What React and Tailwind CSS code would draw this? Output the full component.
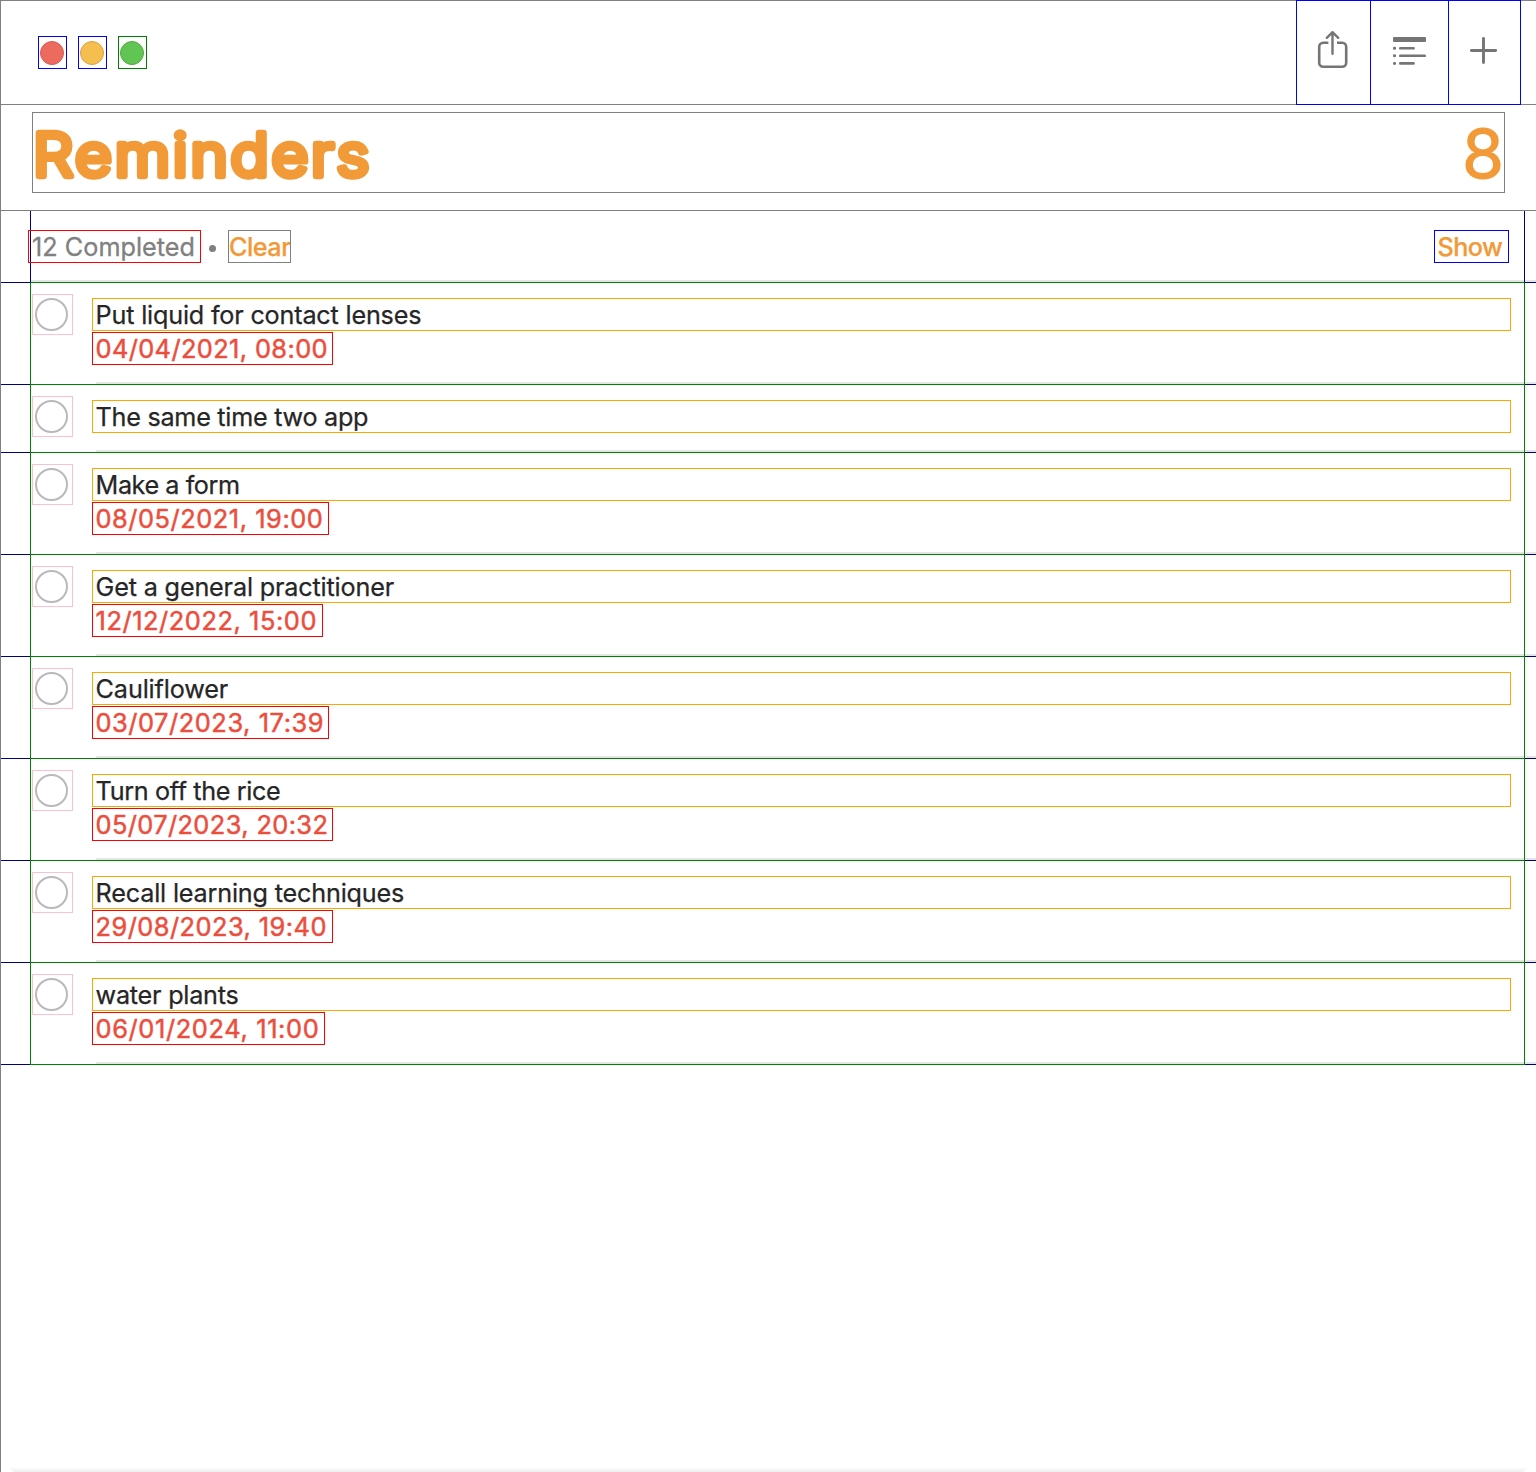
import React from "react";

const reminders = [
  { title: "Put liquid for contact lenses", track: "tracking-[-0.19px]", due: "04/04/2021, 08:00", dueBox: "w-[241px] tracking-[0.38px]" },
  { title: "The same time two app", track: "tracking-[-0.27px]" },
  { title: "Make a form", track: "tracking-[-0.44px]", due: "08/05/2021, 19:00", dueBox: "w-[237px] tracking-[0.54px]" },
  { title: "Get a general practitioner", track: "tracking-[-0.17px]", due: "12/12/2022, 15:00", dueBox: "w-[231px] tracking-[0.56px]" },
  { title: "Cauliflower", track: "tracking-[-0.13px]", due: "03/07/2023, 17:39", dueBox: "w-[237px] tracking-[0.56px]" },
  { title: "Turn off the rice", track: "tracking-[-0.36px]", due: "05/07/2023, 20:32", dueBox: "w-[241px] tracking-[0.39px]" },
  { title: "Recall learning techniques", track: "tracking-[-0.18px]", due: "29/08/2023, 19:40", dueBox: "w-[241px] tracking-[0.46px]" },
  { title: "water plants", track: "tracking-[-0.24px]", due: "06/01/2024, 11:00", dueBox: "w-[233px] tracking-[0.64px]" },
];

function TrafficLight({ box, dot }) {
  return (
    <div className={`h-[33px] w-[29px] border pl-px pt-1 ${box}`}>
      <div className={`size-6 rounded-full border ${dot}`} />
    </div>
  );
}

function ToolButton({ width, label, children }) {
  return (
    <button aria-label={label} className={`-mt-px -ml-px h-[105px] shrink-0 border border-[#0000ff] text-[#757575] ${width}`}>
      {children}
    </button>
  );
}

function Header() {
  return (
    <header className="flex h-[105px] shrink-0 justify-between border-y border-[#808080]">
      <div className="flex gap-[11px] pl-[37px] pt-[35px]">
        <TrafficLight box="border-[#0000ff]" dot="border-[#d65a50] bg-[#ec6a5e]" />
        <TrafficLight box="border-[#0000ff]" dot="border-[#d8a243] bg-[#f4bf4f]" />
        <TrafficLight box="border-[#008000]" dot="border-[#52a842] bg-[#61c554]" />
      </div>
      <div className="flex pr-[15px]">
        <ToolButton width="w-[75px]" label="Share">
          <svg width="73" height="103" viewBox="1297 1 73 103" fill="none" stroke="currentColor" strokeWidth="2.6" strokeLinejoin="round">
            <path d="M1328.4 42.8h-5.2a4 4 0 0 0-4 4v16a4 4 0 0 0 4 4h19a4 4 0 0 0 4-4v-16a4 4 0 0 0-4-4h-5.2" />
            <path d="M1332.5 32.4v21.4M1326.8 37.8l5.7-5.6 5.7 5.6" strokeLinecap="round" strokeWidth="2.4" />
          </svg>
        </ToolButton>
        <ToolButton width="w-[79px]" label="View options">
          <svg width="77" height="103" viewBox="1371 1 77 103" fill="currentColor">
            <rect x="1393" y="37" width="33" height="5" rx="1" />
            <rect x="1393" y="46.8" width="3" height="3" rx="1.3" />
            <rect x="1399" y="47" width="15.8" height="2.6" rx="1.2" />
            <rect x="1393" y="54.3" width="3" height="3" rx="1.3" />
            <rect x="1399" y="54.5" width="27" height="2.6" rx="1.2" />
            <rect x="1393" y="61.9" width="3" height="3" rx="1.3" />
            <rect x="1399" y="62.1" width="15.8" height="2.6" rx="1.2" />
          </svg>
        </ToolButton>
        <ToolButton width="w-[73px]" label="Add">
          <svg width="71" height="103" viewBox="1449 1 71 103" fill="none" stroke="currentColor" strokeWidth="2.9" strokeLinecap="round">
            <path d="M1471.4 50.5h24.3M1483.5 38.4v24.2" />
          </svg>
        </ToolButton>
      </div>
    </header>
  );
}

function Title() {
  return (
    <section className="h-[106px] shrink-0 border-b border-[#808080] pl-[31px] pt-[7px]">
      <div className="flex h-[81px] w-[1473px] items-start justify-between border border-[#808080]">
        <h1>
          <svg width="345" height="79" className="block">
            <text transform="translate(-0.1 62.7) scale(1.07 1)" fontFamily="Inter, sans-serif" fontWeight="300" fontSize="59.3" letterSpacing="2.6" fill="#f19a37" stroke="#f19a37" strokeWidth="6.4" strokeLinejoin="round">
              Reminders
            </text>
          </svg>
        </h1>
        <span className="text-[68px] leading-[81px] text-[#f19a37] [-webkit-text-stroke:1.1px_#f19a37]">8</span>
      </div>
    </section>
  );
}

function Summary() {
  return (
    <div className="flex h-[72px] shrink-0">
      <div className="w-[29px] border-b border-[#000080]" />
      <div className="flex w-[1495px] flex-col border-x border-b border-x-[#000080] border-b-[#008000]">
        <div className="flex h-[69px] items-start pt-[19px] text-[25.2px] leading-[33px]">
          <div className="relative -ml-[3px] h-[33px] w-[173px] whitespace-nowrap border border-[#ff0000] pl-[3px] tracking-[0.04px] text-[#808080] [-webkit-text-stroke:0.3px_#808080]">12 Completed</div>
          <div className="ml-2 mt-[15px] size-[7px] rounded-full bg-[#808080]" />
          <div className="ml-3 h-[33px] w-[63px] overflow-hidden whitespace-nowrap border border-[#808080] font-medium tracking-[-0.5px] text-[#f19a37] [-webkit-text-stroke:0.25px_#f19a37]">Clear</div>
          <div className="ml-auto mr-[15px] h-[33px] w-[75px] whitespace-nowrap border border-[#0000ff] pl-[2.6px] font-medium tracking-[-0.6px] text-[#f19a37] [-webkit-text-stroke:0.25px_#f19a37]">Show</div>
        </div>
        <div className="h-0.5 bg-[#e5e5e5]" />
      </div>
      <div className="flex grow flex-col justify-end border-b border-[#000080]">
        <div className="h-0.5 bg-[#e5e5e5]" />
      </div>
    </div>
  );
}

function Row({ item }) {
  return (
    <li className={`flex shrink-0 ${item.due ? "h-[102px]" : "h-[68px]"}`}>
      <div className="w-[29px] border-b border-[#000080]" />
      <div className="flex w-[1495px] border-x border-b border-[#008000]">
        <div className="ml-px mt-[11px] size-[41px] shrink-0 border border-[#ffc0cb] pl-[2px] pt-[3px]">
          <div className="size-[33px] rounded-full border-2 border-[#b9b9b9]" />
        </div>
        <div className="ml-[19px] flex grow flex-col pt-[15px] text-[25.2px]">
          <div className={`h-[33px] w-[1419px] whitespace-nowrap border border-[#ffa500] pl-[2.6px] leading-[33px] text-[#262626] [-webkit-text-stroke:0.25px_#262626] ${item.track}`}>{item.title}</div>
          {item.due && (
            <div className={`mt-px h-[33px] whitespace-nowrap border border-[#ff0000] pl-[2.5px] text-[25.4px] leading-[31px] text-[#eb4e3d] [-webkit-text-stroke:0.5px_#eb4e3d] ${item.dueBox}`}>{item.due}</div>
          )}
          <div className="ml-1 mt-auto h-0.5 bg-[#e5e5e5]" />
        </div>
      </div>
      <div className="flex grow flex-col justify-end border-b border-[#000080]">
        <div className="h-0.5 bg-[#e5e5e5]" />
      </div>
    </li>
  );
}

export default function App() {
  return (
    <main className="flex h-[1472px] w-[1536px] flex-col overflow-hidden border-l border-[#808080] bg-white font-[Inter,sans-serif]">
      <Header />
      <Title />
      <Summary />
      <ul className="flex flex-col">
        {reminders.map((item) => (
          <Row key={item.title} item={item} />
        ))}
      </ul>
      <div className="mx-[9px] mt-auto h-[5px] rounded-b-[18px] bg-gradient-to-b from-white to-[#efefef]" />
    </main>
  );
}
